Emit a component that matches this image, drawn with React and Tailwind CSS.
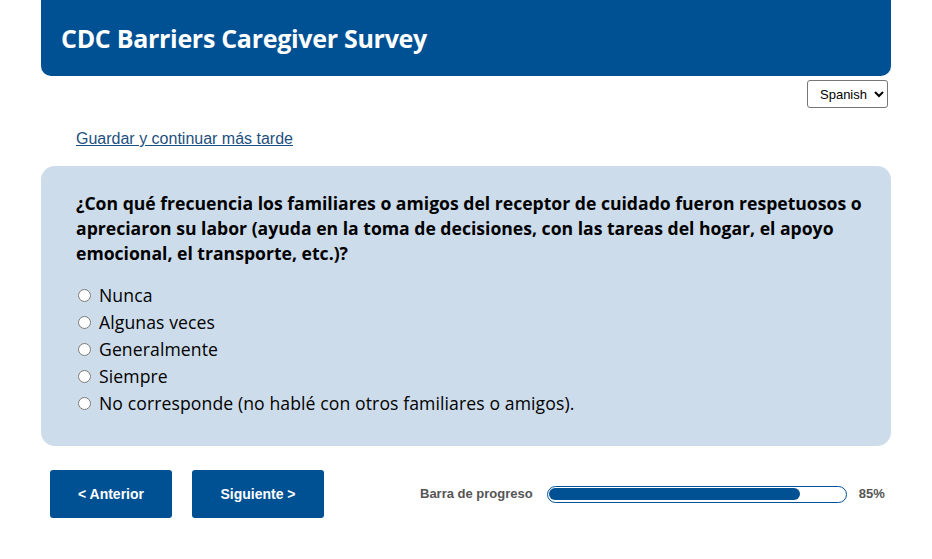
import { useState } from 'react';

const options = [
  'Nunca',
  'Algunas veces',
  'Generalmente',
  'Siempre',
  'No corresponde (no hablé con otros familiares o amigos).',
];

export default function App() {
  const [answer, setAnswer] = useState(null);
  const [lang, setLang] = useState('es');
  const progress = 85;

  return (
    <div className="min-h-screen bg-white">
      <div className="mx-auto w-[850px]">
        {/* header */}
        <div className="-mt-4 flex h-[92px] items-end rounded-[10px] bg-[#005194] pb-[23px] pl-5">
          <h1 className="text-[25px] font-bold leading-[30px] text-white [font-family:'Open_Sans',sans-serif] tracking-[-0.3px]">
            CDC Barriers Caregiver Survey
          </h1>
        </div>

        <div className="mt-1 flex justify-end pr-[3px]">
          <select
            value={lang}
            onChange={e => setLang(e.target.value)}
            className="h-[28px] w-[81px] rounded-[3px] border border-[#767676] bg-white pl-2 text-[13px] text-black [font-family:'Liberation_Sans',Arial,sans-serif]"
          >
            <option value="es">Spanish</option>
            <option value="en">English</option>
          </select>
        </div>

        <div className="mt-[18px] pl-[35px]">
          <a href="#" className="text-[16px] text-[#1d4f80] underline [font-family:'Liberation_Sans',Arial,sans-serif]">
            Guardar y continuar más tarde
          </a>
        </div>

        <div className="mt-[15px] rounded-[14px] bg-[#cddcea] pb-[29px] pl-[35px] pr-6 pt-[25px] [font-family:'Open_Sans',sans-serif]">
          <p className="text-[17.6px] font-bold leading-[25px] text-black">
            ¿Con qué frecuencia los familiares o amigos del receptor de cuidado fueron respetuosos o apreciaron su labor (ayuda en la toma de decisiones, con las tareas del hogar, el apoyo emocional, el transporte, etc.)?
          </p>
          <div className="mt-[16px] flex flex-col">
            {options.map(o => (
              <label key={o} className="flex h-[27px] items-center gap-[8px] text-[17.6px] tracking-[0.1px] text-black">
                <input
                  type="radio"
                  name="q"
                  checked={answer === o}
                  onChange={() => setAnswer(o)}
                  className="ml-[2px] h-[13px] w-[13px]"
                />
                {o}
              </label>
            ))}
          </div>
        </div>

        <div className="mt-[24px] flex items-center pl-[9px] [font-family:'Liberation_Sans',Arial,sans-serif]">
          <button className="h-12 w-[122px] rounded-[3px] bg-[#005194] text-[14px] font-bold text-white">
            &lt; Anterior
          </button>
          <button className="ml-5 h-12 w-[132px] rounded-[3px] bg-[#005194] text-[14px] font-bold text-white">
            Siguiente &gt;
          </button>
          <div className="ml-[96px] flex items-center">
            <span className="text-[13px] font-bold text-[#555]">Barra de progreso</span>
            <div className="ml-[14px] h-[17px] w-[300px] rounded-full border-[1.5px] border-[#005194] bg-white p-[1.5px]">
              <div className="h-full rounded-full bg-[#005194]" style={{ width: `${progress}%` }} />
            </div>
            <span className="ml-3 text-[13px] font-bold text-[#555]">{progress}%</span>
          </div>
        </div>
      </div>
    </div>
  );
}
